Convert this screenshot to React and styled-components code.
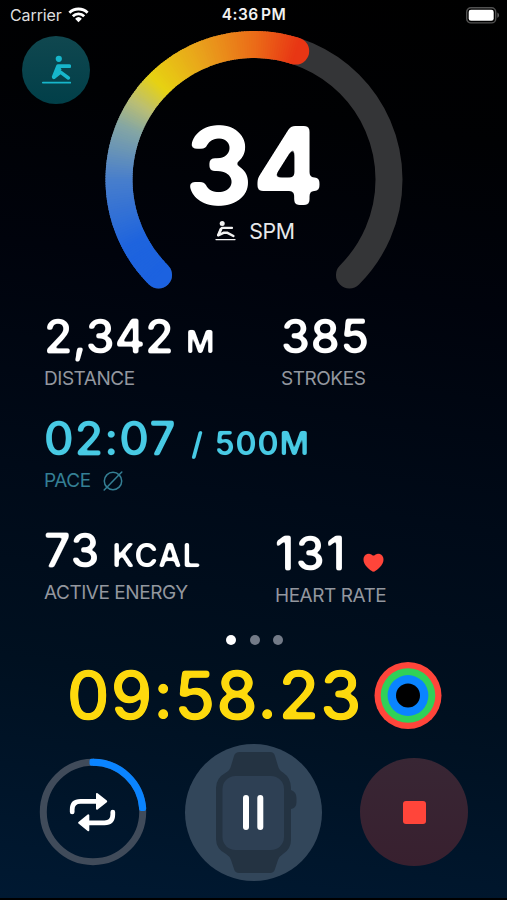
import React from "react";
import styled, { createGlobalStyle } from "styled-components";

const GlobalStyle = createGlobalStyle`
  * { box-sizing: border-box; }
  body { margin: 0; background: #000; }
`;

const Screen = styled.main`
  display: flex;
  flex-direction: column;
  width: 507px;
  height: 900px;
  overflow: hidden;
  color: #fff;
  font-family: Inter, "Liberation Sans", sans-serif;
  background: linear-gradient(188deg, #000 0%, #000103 15%, #00030c 32%, #000a18 55%, #001020 75%, #001932 100%);
  border-bottom: 2px solid #000;
`;

const FilterDefs = styled.svg`
  display: block;
  width: 0;
  height: 0;
`;

const StatusBar = styled.header`
  display: grid;
  grid-template-columns: 1fr auto 1fr;
  align-items: center;
  height: 31px;
  padding: 0 7px 1px 10px;
  font-size: 16px;
  line-height: 20px;
`;

const Carrier = styled.div`
  display: flex;
  align-items: center;
  gap: 6px;
  color: #dedede;
  letter-spacing: -0.1px;
`;

const Clock = styled.time`
  font-size: 15.5px;
  font-weight: 600;
  letter-spacing: 0.45px;
  word-spacing: -2px;
  margin-right: 2px;
  color: #f2f2f2;
`;

const BatterySlot = styled.div`
  display: flex;
  justify-content: flex-end;
`;

const GaugeRow = styled.section`
  display: flex;
  align-items: flex-start;
  height: 258px;
  padding-left: 22px;
`;

const ModeButton = styled.button`
  display: grid;
  place-items: center;
  width: 68px;
  height: 68px;
  margin: 5px 15px 0 0;
  padding: 0;
  border: 0;
  border-radius: 50%;
  background: linear-gradient(#10474f, #013f49);
`;

const GaugeStack = styled.div`
  display: grid;
  width: 297px;
  height: 258px;

  > * { grid-area: 1 / 1; }
`;

const GaugeArt = styled.svg`
  overflow: visible;
`;

const GaugeReadout = styled.div`
  display: flex;
  flex-direction: column;
  align-items: center;
  padding-top: 86px;
`;

const Rate = styled.div`
  height: 96px;
  padding-left: 2px;
  font-size: 106px;
  line-height: 97px;
  font-weight: 600;
  letter-spacing: 0.5px;
  -webkit-text-stroke: 1.6px #fff;
  filter: url(#round-large);
`;

const RateUnit = styled.div`
  display: flex;
  align-items: center;
  gap: 13px;
  margin-top: 5px;
  padding-left: 3px;
  font-size: 21.3px;
  line-height: 26px;
  letter-spacing: -0.4px;
  color: #e8e9ea;
`;

const Metrics = styled.section`
  display: grid;
  grid-template-columns: ${(p) => p.$split}px 1fr;
  height: ${(p) => p.$height}px;
  padding: ${(p) => p.$top}px 0 0 44px;
`;

const Metric = styled.div`
  display: flex;
  flex-direction: column;
  gap: 8px;
  padding-top: ${(p) => p.$drop || 0}px;
  color: ${(p) => (p.$accent ? "#48cae4" : "#fff")};
  white-space: nowrap;
`;

const MetricValue = styled.div`
  display: flex;
  align-items: baseline;
  height: 46px;
  font-size: 46px;
  line-height: 46px;
  font-weight: 500;
  letter-spacing: ${(p) => p.$track || 0}px;
  -webkit-text-stroke: 0.45px currentColor;
  filter: url(#round-medium);
`;

const Unit = styled.span`
  margin-left: ${(p) => p.$gap}px;
  font-size: ${(p) => p.$size || 32}px;
  font-weight: 600;
  letter-spacing: ${(p) => p.$track || 0}px;
  word-spacing: ${(p) => p.$wordGap || 0}px;
  -webkit-text-stroke-width: 0;
`;

const MetricLabel = styled.div`
  display: flex;
  align-items: center;
  gap: 12px;
  height: 24px;
  font-size: 19px;
  line-height: 24px;
  letter-spacing: -0.46px;
  color: ${(p) => (p.$accent ? "#347f94" : "#93979f")};
`;

const Heart = styled.svg`
  align-self: flex-end;
  margin: 0 0 3px 16px;
`;

const Pager = styled.nav`
  display: flex;
  justify-content: center;
  gap: 13.6px;
  height: 27px;
  padding: 3px 0 0 2px;
`;

const PageDot = styled.span`
  width: 10px;
  height: 10px;
  border-radius: 50%;
  background: ${(p) => (p.$active ? "#fff" : "#737b88")};
`;

const TimerRow = styled.section`
  display: flex;
  align-items: center;
  gap: 11.5px;
  height: 72px;
  padding-left: 67px;
`;

const Timer = styled.div`
  width: 295px;
  font-size: 66px;
  line-height: 72px;
  font-weight: 500;
  letter-spacing: 1.05px;
  white-space: nowrap;
  color: #fdd90d;
  -webkit-text-stroke: 0.5px #fdd90d;
  filter: url(#round-timer);
`;

const Controls = styled.footer`
  display: flex;
  align-items: center;
  gap: 38px;
  height: 138px;
  margin-top: 12px;
  padding-left: 38.5px;
`;

const ControlButton = styled.button`
  display: grid;
  place-items: center;
  width: ${(p) => p.$size}px;
  height: ${(p) => p.$size}px;
  padding: 0;
  border: 0;
  border-radius: 50%;
  background: ${(p) => p.$fill || "transparent"};
`;

const StopMark = styled.span`
  width: 23px;
  height: 23px;
  margin-left: 1px;
  border-radius: 3px;
  background: #ff453a;
`;

const STOPS = [
  [-135, [28, 98, 224]],
  [-118, [30, 100, 222]],
  [-90, [72, 126, 204]],
  [-68, [132, 166, 164]],
  [-57, [186, 190, 116]],
  [-45, [231, 210, 18]],
  [-22, [233, 160, 28]],
  [0, [235, 108, 24]],
  [18, [232, 54, 20]],
];

function colorAt(angle) {
  for (let i = 1; i < STOPS.length; i++) {
    const [a, from] = STOPS[i - 1];
    const [b, to] = STOPS[i];
    if (angle <= b) {
      const t = (angle - a) / (b - a);
      return `rgb(${from.map((c, k) => Math.round(c + (to[k] - c) * t)).join(",")})`;
    }
  }
  return `rgb(${STOPS[STOPS.length - 1][1].join(",")})`;
}

function point(angle, r = 135) {
  const rad = (angle * Math.PI) / 180;
  return [149 + r * Math.sin(rad), 148.5 - r * Math.cos(rad)];
}

function arc(from, to) {
  const large = to - from > 180 ? 1 : 0;
  return `M${point(from).join(" ")}A135 135 0 ${large} 1 ${point(to).join(" ")}`;
}

/* Softens the corners of heavy lettering: blur, then sharpen the alpha edge. */
function RoundFilter({ id, radius, slope }) {
  return (
    <filter id={id} x="-5%" y="-20%" width="110%" height="140%" colorInterpolationFilters="sRGB">
      <feGaussianBlur stdDeviation={radius} />
      <feComponentTransfer>
        <feFuncA type="linear" slope={slope} intercept={0.5 - slope * 0.47} />
      </feComponentTransfer>
    </filter>
  );
}

function Gauge() {
  const slices = [];
  for (let a = -135; a < 18; a += 1) slices.push(a);
  const [sx, sy] = point(-135);
  const [ex, ey] = point(18);
  return (
    <GaugeArt width="297" height="258" viewBox="0 0 297 258" fill="none">
      <path d={arc(-135, 135)} stroke="#343537" strokeWidth="27" strokeLinecap="round" />
      <circle cx={sx} cy={sy} r="13.5" fill={colorAt(-135)} />
      <circle cx={ex} cy={ey} r="13.5" fill={colorAt(18)} />
      {slices.map((a) => (
        <path key={a} d={arc(a, Math.min(a + 1.6, 18))} stroke={colorAt(a + 0.5)} strokeWidth="27" />
      ))}
    </GaugeArt>
  );
}

function RowerIcon() {
  return (
    <svg width="30" height="30" viewBox="0 0 30 30" fill="none" stroke="#17b6cb" strokeLinecap="round" strokeLinejoin="round">
      <circle cx="17.8" cy="3.8" r="3.1" fill="#17b6cb" stroke="none" />
      <path d="M28.3 11.2H17L12.8 21.8" strokeWidth="3.8" />
      <path d="M15.5 14L17.5 11.5L19.5 14.5L13.5 22.5Z" fill="#17b6cb" strokeWidth="2" />
      <path d="M12.9 22.4L19.5 17.2L27.4 23" strokeWidth="3.5" />
      <path d="M1.8 27.6H29.3" strokeWidth="1.7" />
    </svg>
  );
}

function StrokeIcon() {
  return (
    <svg width="21" height="20" viewBox="0 0 21 20" fill="none" stroke="#f2f2f2" strokeLinecap="round" strokeLinejoin="round">
      <circle cx="7.2" cy="2.5" r="2.5" fill="#f2f2f2" stroke="none" />
      <path d="M17 6.9H6.8L3.4 14" strokeWidth="2.2" />
      <path d="M5.8 8L3.2 14.3L8.5 11.8L12 11.7L18.4 15" strokeWidth="2.5" />
      <path d="M1 18.6H20" strokeWidth="1.3" />
    </svg>
  );
}

function WifiIcon() {
  return (
    <svg width="21" height="16" viewBox="0 0 21 16" fill="none" stroke="#fff" strokeWidth="2.8">
      <path d="M1.4 5.7A13 13 0 0 1 19.6 5.7" />
      <path d="M4.8 9.2A8 8 0 0 1 16.2 9.2" />
      <path d="M7.1 11.7A5 5 0 0 1 13.9 11.7L10.5 15.2Z" fill="#fff" stroke="none" />
    </svg>
  );
}

function BatteryIcon() {
  return (
    <svg width="34" height="17" viewBox="0 0 34 17" fill="none">
      <rect x="0.7" y="0.7" width="29" height="15.2" rx="4.2" stroke="#515151" strokeWidth="1.4" />
      <rect x="2.7" y="2.8" width="25" height="11" rx="2.3" fill="#fff" />
      <path d="M31.4 5.6C33.6 6.8 33.6 9.8 31.4 11Z" fill="#5c5c5c" />
    </svg>
  );
}

function AverageIcon() {
  return (
    <svg width="20" height="20" viewBox="0 0 20 20" fill="none" stroke="#347f94" strokeWidth="1.5" strokeLinecap="round">
      <circle cx="10" cy="10" r="8.7" />
      <path d="M1.2 19L18.8 1" />
    </svg>
  );
}

function HeartIcon() {
  return (
    <Heart width="21" height="20" viewBox="0 0 21 20">
      <path d="M10.5 19.2C6.2 16.4.5 12 .5 6.5C.5 3.1 2.7.8 5.6.8C7.8.8 9.5 1.9 10.5 3.7C11.5 1.9 13.2.8 15.4.8C18.3.8 20.5 3.1 20.5 6.5C20.5 12 14.8 16.4 10.5 19.2Z" fill="#ff453a" />
    </Heart>
  );
}

function ActivityRings() {
  return (
    <svg width="68" height="68" viewBox="0 0 68 68">
      <circle cx="34" cy="34.5" r="33.5" fill="#ff453a" />
      <circle cx="34" cy="34.5" r="27.3" fill="#30d158" />
      <circle cx="34" cy="34.5" r="20.4" fill="#0a84ff" />
      <circle cx="34" cy="34.5" r="12" fill="#000" />
    </svg>
  );
}

function IntervalIcon() {
  return (
    <svg width="108" height="108" viewBox="0 0 108 108" fill="none">
      <circle cx="54" cy="54" r="49.7" stroke="#404b5a" strokeWidth="7" />
      <path d="M54 4.3A49.7 49.7 0 0 1 103.7 51" stroke="#0a84ff" strokeWidth="7" />
      <rect x="50.5" y="0.8" width="6" height="7" rx="2" fill="#0a84ff" />
      <rect x="100.1" y="47" width="7" height="6" rx="2" fill="#0a84ff" />
      <g stroke="#fff" strokeWidth="4.7" strokeLinecap="round">
        <path d="M33.2 54V51.5Q33.2 43.4 41.5 43.4H58" />
        <path d="M73.8 54V56.5Q73.8 64.8 65.5 64.8H50" />
      </g>
      <g fill="#fff" stroke="#fff" strokeWidth="2" strokeLinejoin="round">
        <path d="M58 36V50.8L67.2 43.4Z" />
        <path d="M49.3 57.4V72.2L40.1 64.8Z" />
      </g>
    </svg>
  );
}

function WatchPauseIcon() {
  return (
    <svg width="137" height="137" viewBox="0 0 137 137">
      <path d="M55 8H85Q89 8 90 12L93 22Q94 26 98 28.5Q106 34 106 44V46Q111.5 48 111.5 54V58Q111.5 64 106 65V96Q106 105 98 110Q94 112.5 93 116L90 125Q89 129 85 129H54Q50 129 49 125L46 116Q45 112.5 41 110Q31 105 31 95V44Q31 34 41 28.5Q45 26 46 22L49 12Q50 8 55 8Z" fill="#243342" />
      <rect x="37.5" y="32" width="61.5" height="74" rx="13" fill="#2e4054" />
      <rect x="58" y="51" width="6" height="35" rx="3" fill="#fff" />
      <rect x="72.3" y="51" width="6" height="35" rx="3" fill="#fff" />
    </svg>
  );
}

export default function App() {
  return (
    <>
      <GlobalStyle />
      <Screen>
        <FilterDefs aria-hidden="true">
          <defs>
            <RoundFilter id="round-large" radius={2.9} slope={7} />
            <RoundFilter id="round-timer" radius={1.6} slope={4.4} />
            <RoundFilter id="round-medium" radius={1.05} slope={3} />
          </defs>
        </FilterDefs>
        <StatusBar>
          <Carrier>Carrier <WifiIcon /></Carrier>
          <Clock>4:36 PM</Clock>
          <BatterySlot><BatteryIcon /></BatterySlot>
        </StatusBar>
        <GaugeRow>
          <ModeButton aria-label="Rowing"><RowerIcon /></ModeButton>
          <GaugeStack>
            <Gauge />
            <GaugeReadout>
              <Rate>34</Rate>
              <RateUnit><StrokeIcon />SPM</RateUnit>
            </GaugeReadout>
          </GaugeStack>
        </GaugeRow>
        <Metrics $split={237} $top={24} $height={126}>
          <Metric>
            <MetricValue $track={0.3}>2,342<Unit $gap={12} $size={31}>M</Unit></MetricValue>
            <MetricLabel>DISTANCE</MetricLabel>
          </Metric>
          <Metric>
            <MetricValue $track={0.9}>385</MetricValue>
            <MetricLabel>STROKES</MetricLabel>
          </Metric>
        </Metrics>
        <Metrics $split={300} $top={0} $height={112}>
          <Metric $accent>
            <MetricValue $track={1.1}>02:07<Unit $gap={14.5} $track={0.9} $wordGap={1.5}>/ 500M</Unit></MetricValue>
            <MetricLabel $accent>PACE<AverageIcon /></MetricLabel>
          </Metric>
        </Metrics>
        <Metrics $split={231} $top={0} $height={105}>
          <Metric>
            <MetricValue $track={0.9}>73<Unit $gap={12} $track={1}>KCAL</Unit></MetricValue>
            <MetricLabel>ACTIVE ENERGY</MetricLabel>
          </Metric>
          <Metric $drop={3}>
            <MetricValue $track={1.7}>131<HeartIcon /></MetricValue>
            <MetricLabel>HEART RATE</MetricLabel>
          </Metric>
        </Metrics>
        <Pager>
          <PageDot $active />
          <PageDot />
          <PageDot />
        </Pager>
        <TimerRow>
          <Timer>09:58.23</Timer>
          <ActivityRings />
        </TimerRow>
        <Controls>
          <ControlButton $size={108} aria-label="Intervals"><IntervalIcon /></ControlButton>
          <ControlButton $size={137} $fill="#32465a" aria-label="Pause"><WatchPauseIcon /></ControlButton>
          <ControlButton $size={108} $fill="linear-gradient(#382634, #38202f)" aria-label="Stop"><StopMark /></ControlButton>
        </Controls>
      </Screen>
    </>
  );
}
